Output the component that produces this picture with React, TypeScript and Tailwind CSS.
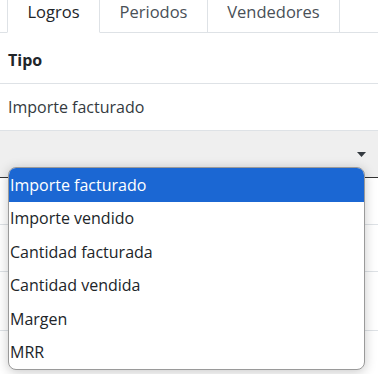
import React from 'react';

const tabs = [
  { label: 'Logros', active: true, w: 'w-[93px]' },
  { label: 'Periodos', active: false, w: 'w-[108px]' },
  { label: 'Vendedores', active: false, w: 'w-[132px]' },
];

const options = [
  'Importe facturado',
  'Importe vendido',
  'Cantidad facturada',
  'Cantidad vendida',
  'Margen',
  'MRR',
];

const App: React.FC = () => {
  return (
    <div className="relative w-[378px] h-[374px] overflow-hidden bg-white text-[#212529] font-['Open_Sans',sans-serif]">
      {/* Tabs */}
      <div className="flex h-[33px] pl-[7px] border-b border-[#dee2e6]">
        {tabs.map((t) => (
          <div
            key={t.label}
            className={`${t.w} -mb-px flex justify-center text-[16.5px] leading-6 border-x border-[#dee2e6] ${
              t.active ? 'bg-white border-b border-b-white text-[#212529]' : 'text-[#495057] border-l-0'
            }`}
          >
            {t.label}
          </div>
        ))}
      </div>

      {/* Table */}
      <div className="px-2 pt-[15px] pb-[11px] text-[16px] leading-6 font-bold border-b border-[#dee2e6]">Tipo</div>
      <div className="px-2 py-[11px] text-[16px] leading-6 text-[#343a40] border-b border-[#dee2e6]">Importe facturado</div>
      <div className="relative h-[47px] bg-[#efefef] border-b border-[#333]">
        <svg className="absolute right-[12px] top-[21px]" width="9" height="5" viewBox="0 0 9 5">
          <path d="M0 0h9L4.5 5z" fill="#343a40" />
        </svg>
      </div>
      <div className="h-[47px] border-b border-[#dee2e6]" />
      <div className="h-[47px] border-b border-[#dee2e6]" />
      <div className="h-[59px] border-b border-[#dee2e6]" />

      {/* Open select list */}
      <div className="absolute left-[8px] top-[167px] w-[357px] h-[203px] overflow-hidden rounded-lg border border-[#9a9a9a] bg-white shadow-[0_2px_12px_rgba(0,0,0,0.22)]">
        {options.map((o, i) => (
          <div
            key={o}
            className={`h-[33.5px] flex items-center pl-[1px] text-[16px] ${
              i === 0 ? 'bg-[#1b67d3] text-white' : 'text-[#212529]'
            }`}
          >
            {o}
          </div>
        ))}
      </div>
    </div>
  );
};

export default App;
